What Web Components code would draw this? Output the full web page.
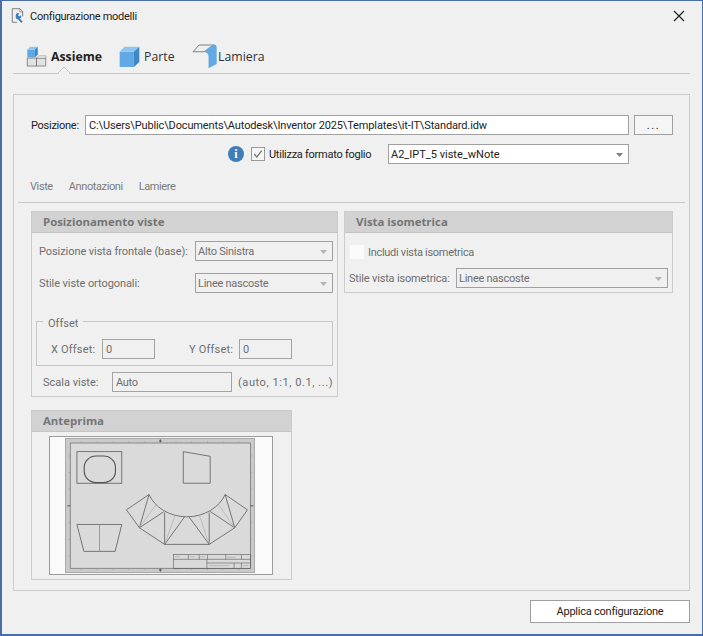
<!DOCTYPE html>
<html lang="it"><head><meta charset="utf-8"><title>Configurazione modelli</title>
<style>
html,body{margin:0;padding:0;background:#f0f0f0}
body{font:11px Roboto,"Noto Sans",sans-serif;color:#222}
</style></head><body>
<config-window></config-window>
<script>
function comp(name,html){
  customElements.define(name,class extends HTMLElement{
    connectedCallback(){
      if(this.shadowRoot)return;
      const r=this.attachShadow({mode:'open'});
      r.innerHTML=typeof html==='function'?html(this):html;
    }
  });
}
comp('ui-label',el=>`<style>:host{display:block;box-sizing:border-box;align-self:flex-start;padding-top:1px;white-space:nowrap;line-height:20px;flex:none;width:${el.getAttribute('w')?el.getAttribute('w')+'px':'auto'}}</style><slot></slot>`);
comp('ui-field',el=>{
  const w=el.getAttribute('w'),dis=el.hasAttribute('disabled');
  return `<style>:host{display:block;flex:none;box-sizing:border-box;height:20px;width:${w}px;border:1px solid ${dis?'#a3a3a3':'#a0a0a0'};background:${dis?'#f0f0f0':'#fff'};color:${dis?'#6e6e6e':'#222'};padding-left:${el.getAttribute('pad')||3}px;line-height:20px;white-space:nowrap;overflow:hidden}</style><slot></slot>`;
});
comp('ui-combo',el=>{
  const w=el.getAttribute('w'),dis=el.hasAttribute('disabled');
  return `<style>:host{display:flex;flex:none;box-sizing:border-box;height:20px;width:${w}px;border:1px solid #a0a0a0;background:${dis?'#f0f0f0':'#fff'};color:${dis?'#6e6e6e':'#222'};padding:0 5px 0 2px;line-height:18px;white-space:nowrap;align-items:center;justify-content:space-between}
  span{padding-top:2px}svg{flex:none;margin-top:1px}</style><span><slot></slot></span><svg width="7" height="4" viewBox="0 0 7 4"><path d="M0 0h7L3.5 4z" fill="${dis?'#b4b4b4':'#808080'}"/></svg>`;
});
comp('ui-check',el=>{
  const on=el.hasAttribute('checked');
  return `<style>:host{display:block;flex:none;box-sizing:border-box;width:14px;height:14px;${on?'border:1px solid #9a9a9a;background:#f6f6f6':'background:#fbfbfb'}}svg{display:block}</style>${on?'<svg width="12" height="12" viewBox="0 0 12 12"><path d="M2.3 6.2 4.8 9 9.8 2.6" fill="none" stroke="#777" stroke-width="1.3"/></svg>':''}`;
});
comp('ui-group',el=>{
  const w=el.getAttribute('w'),h=el.getAttribute('h');
  return `<style>:host{display:block;flex:none;box-sizing:border-box;width:${w}px;height:${h}px;border:1px solid #cbcbcb}
  header{box-sizing:border-box;height:21px;padding-left:11px;background:#d2d2d2;border-bottom:1px solid #c4c4c4;color:#757575;font-family:"Open Sans",sans-serif;font-weight:700;font-size:11.4px;line-height:20px}</style><header>${el.getAttribute('title-text')}</header><slot></slot>`;
});
comp('ui-row',el=>`<style>:host{display:flex;align-items:center;height:${el.getAttribute('h')||20}px;margin-top:${el.getAttribute('mt')||0}px;padding-left:${el.getAttribute('pl')||0}px;color:#6e6e6e}</style><slot></slot>`);
comp('offset-box',`<style>:host{display:block;position:relative;box-sizing:border-box;width:297px;height:45px;margin:28px 0 0 -3px;border:1px solid #c6c6c6;padding:17px 0 0 14px;color:#6e6e6e}
  .legend{position:absolute;left:6px;top:-9px;padding:0 5px;background:#f0f0f0;line-height:22px}
  .row{display:flex;align-items:center;height:20px}</style><div class="legend">Offset</div><div class="row"><slot></slot></div>`);
comp('main-tab',el=>`<style>:host{display:flex;align-items:center;flex:none;font-family:"Open Sans",sans-serif;font-size:12.3px;color:${el.hasAttribute('active')?'#222':'#333'};font-weight:${el.hasAttribute('active')?700:400};height:26px}</style><slot name="icon"></slot><slot></slot>`);
comp('tab-strip',`<style>:host{display:flex;position:relative;box-sizing:border-box;height:42px;margin-left:11px;width:677px;border-bottom:1px solid #c8c8c8;padding:11px 0 0 13px}
  svg{position:absolute;left:44px;top:34px}</style><slot></slot><svg width="14" height="8" viewBox="0 0 14 8"><path d="M1 7 7 1l6 6" fill="#f0f0f0" stroke="#c8c8c8"/><path d="M2 7.6h10" stroke="#f0f0f0" stroke-width="1.6"/></svg>`);
comp('title-bar',`<style>:host{display:flex;align-items:center;box-sizing:border-box;height:31px;padding:0 17px 1px 9px;color:#222;letter-spacing:-.27px}
  .t{flex:1;margin-left:4px}svg{display:block;flex:none}</style>
  <svg width="15" height="16" viewBox="33 26 42 46"><path d="M36 28H58L66 36V50M50 67H36V28" fill="none" stroke="#6a6a6a" stroke-width="2.4"/><path d="M58 28v9h8" fill="none" stroke="#6a6a6a" stroke-width="1.8"/><path d="M47 43c3-3 7-3 9-1l-3 4 1 3 4 1 3-3c2 3 1 8-3 9l-1 0 9 9-4 4-9-10c-6 0-9-9-6-16z" fill="#3b7fc0"/></svg>
  <span class="t"><slot></slot></span>
  <svg width="12" height="12" viewBox="0 0 12 12"><path d="M1 1l10 10M11 1 1 11" stroke="#222" stroke-width="1.2"/></svg>`);
comp('sub-tabs',`<style>:host{display:flex;align-items:center;box-sizing:border-box;height:26px;width:667px;margin:13px 0 0 -13px;padding:0 0 6px 12px;border-bottom:1px solid #c8c8c8;color:#7b7b7b;letter-spacing:-.4px}</style><slot></slot>`);
comp('main-panel',`<style>:host{display:block;box-sizing:border-box;width:677px;height:497px;margin:20px 0 0 11px;border:1px solid #cbcbcb;padding:20px 16px 0 17px}</style><slot></slot>`);
comp('preview-sheet',`<style>:host{display:block;box-sizing:border-box;width:224px;height:139px;margin:4px 0 0 17px;background:#fafafa;border:1px solid #9c9c9c}svg{display:block}</style>
<svg width="222" height="137" viewBox="74 95 668 412"><defs><filter id="b" x="-2%" y="-2%" width="104%" height="104%"><feGaussianBlur stdDeviation="1.1"/></filter></defs>
<g filter="url(#b)" fill="none" stroke="#5c5c5c" stroke-width="2.4">
<rect x="121" y="99" width="568" height="404" fill="#cacaca" stroke="#999"/>
<rect x="135" y="113" width="542" height="377" fill="#dadada" stroke="#777"/>
<g stroke="#9a9a9a" stroke-width="2"><path d="M168 108v5M216 108v5M264 108v5M311 108v5M358 108v5M453 108v5M500 108v5M548 108v5M595 108v5M642 108v5M168 490v5M216 490v5M264 490v5M311 490v5M358 490v5M453 490v5M500 490v5M548 490v5M595 490v5M642 490v5M130 152h5M130 202h5M130 252h5M130 352h5M130 403h5M130 453h5M677 152h5M677 202h5M677 252h5M677 352h5M677 403h5M677 453h5"/></g>
<g stroke="#555" stroke-width="3"><path d="M406 102v9M402 107h8M406 491v9M402 495h8M126 302h9M677 302h9"/></g>
<rect x="155" y="139" width="135" height="95"/>
<rect x="177" y="152" width="94" height="80" rx="36" ry="34" stroke-width="3.4" stroke="#555"/>
<path d="M475 139 556 153V234H475Z"/>
<path d="M155 358H290L270 439H176Z"/><path d="M223 358V439" stroke="#8a8a8a"/>
<path d="M372 268 304 314 343 368 419 418H553L630 368 668 314 601 268C585 305 540 335 486 335 432 335 388 305 372 268Z"/>
<path d="M372 268 343 368 416 320M419 322V418L479 335M492 335 553 418V322M630 368 556 319M601 268 630 368"/>
<g stroke="#a8a8a8" stroke-width="1.8"><path d="M343 368 392 300M419 418 450 332M553 418 524 332M630 368 582 300"/></g>
<g stroke-width="1.8"><rect x="445" y="449" width="232" height="41"/><path d="M445 463H677M546 463V490M546 474H677M490 449V463M523 449V463M548 449V463M603 449V463M650 449V463M628 474V490M650 474V490"/></g>
<g stroke="#9a9a9a" stroke-width="1.6"><path d="M449 455H465M494 455H510M527 455H540M607 457H632M552 482H612M655 482H672"/></g>
</g></svg>`);
comp('config-window',`<style>:host{display:flex;flex-direction:column;box-sizing:border-box;width:703px;height:636px;overflow:hidden;background:#f0f0f0;border-style:solid;border-color:#4a6fa8;border-width:1px 1px 2px 2px}
  .foot{display:flex;justify-content:flex-end;padding:9px 12px 0 0;flex:none}
  .apply{box-sizing:border-box;width:160px;height:23px;border:1px solid #a0a0a0;background:#fff;color:#222;line-height:21px;text-align:center;letter-spacing:-.23px}
  .r{display:flex;align-items:center;height:20px}
  .cols{display:flex;align-items:flex-start;gap:6px;margin-top:8px}
  .col{display:flex;flex-direction:column;gap:13px;flex:none}
  .tab-t{margin-left:4px}
  svg.i{display:block;flex:none}
  .info{flex:none;width:16px;height:16px;border-radius:50%;background:#3f7db8;color:#fff;font:700 12px/16px "Liberation Serif",serif;text-align:center}
  .btn{box-sizing:border-box;width:39px;height:20px;border:1px solid #a0a0a0;background:#f5f5f5;text-align:center;line-height:20px;margin-left:5px;flex:none;letter-spacing:1.6px}
  .st{margin-right:16px}
</style>
<title-bar>Configurazione modelli</title-bar>
<tab-strip>
  <main-tab active style="width:93px"><svg slot="icon" class="i" width="21" height="21" viewBox="76 134 66 66">
    <path d="M80 172h29v25H80z" fill="#e2e2e2" stroke="#555" stroke-width="2"/><path d="M109 172h29v25h-29z" fill="#e2e2e2" stroke="#555" stroke-width="2"/><path d="M109 172l8-7h22l-1 7z" fill="#f4f4f4" stroke="#777" stroke-width="1.5"/>
    <path d="M80 145h24v25H80z" fill="#5fa8e2"/><path d="M80 145l9-9h24l-9 9z" fill="#8fc6f0"/><path d="M104 145l9-9v25l-9 9z" fill="#3f88c8"/></svg><span class="tab-t">Assieme</span></main-tab>
  <main-tab style="width:73px"><svg slot="icon" class="i" width="21" height="21" viewBox="356 133 62 62">
    <path d="M358 150h42v45h-42z" fill="#62a9e3"/><path d="M358 150l14-15h44l-16 15z" fill="#8fc6f0"/><path d="M400 150l16-15v45l-16 15z" fill="#3f88c8"/></svg><span class="tab-t">Parte</span></main-tab>
  <main-tab><svg slot="icon" class="i" width="25" height="25" viewBox="576 131 74 74">
    <path d="M579 154 597 134H640L612 154Z" fill="#efefef" stroke="#666" stroke-width="2.4"/><path d="M612 154C620 146 630 136 640 133 646 132 649 136 649 142V190L625 203V168C625 160 620 156 612 154Z" fill="#62a9e3"/></svg><span style="margin-left:1px">Lamiera</span></main-tab>
</tab-strip>
<main-panel>
  <div class="r"><ui-label w="54" style="letter-spacing:-.27px">Posizione:</ui-label><ui-field w="544" style="letter-spacing:-.135px">C:\\Users\\Public\\Documents\\Autodesk\\Inventor 2025\\Templates\\it-IT\\Standard.idw</ui-field><div class="btn">...</div></div>
  <div class="r" style="margin-top:9px;padding-left:197px"><div class="info">i</div><ui-check checked style="margin-left:7px"></ui-check><ui-label w="119" style="margin-left:4px;letter-spacing:-.26px">Utilizza formato foglio</ui-label><ui-combo w="241">A2_IPT_5 viste_wNote</ui-combo></div>
  <sub-tabs><span class="st">Viste</span><span class="st">Annotazioni</span><span>Lamiere</span></sub-tabs>
  <div class="cols">
    <div class="col">
      <ui-group w="307" h="186" title-text="Posizionamento viste">
        <ui-row mt="8" pl="7"><ui-label w="156" style="letter-spacing:-.07px">Posizione vista frontale (base):</ui-label><ui-combo w="138" disabled style="letter-spacing:-.23px">Alto Sinistra</ui-combo></ui-row>
        <ui-row mt="12" pl="7"><ui-label w="156" style="letter-spacing:-.08px">Stile viste ortogonali:</ui-label><ui-combo w="138" disabled style="letter-spacing:-.26px">Linee nascoste</ui-combo></ui-row>
        <div style="padding-left:7px"><offset-box><ui-label w="51" style="letter-spacing:.2px">X Offset:</ui-label><ui-field w="53" disabled>0</ui-field><ui-label w="50" style="margin-left:34px;letter-spacing:.2px">Y Offset:</ui-label><ui-field w="53" disabled>0</ui-field></offset-box></div>
        <ui-row mt="6" pl="11"><ui-label w="69">Scala viste:</ui-label><ui-field w="120" disabled style="letter-spacing:-.3px">Auto</ui-field><ui-label style="margin-left:6px;letter-spacing:.57px">(auto, 1:1, 0.1, ...)</ui-label></ui-row>
      </ui-group>
      <ui-group w="261" h="170" title-text="Anteprima"><preview-sheet></preview-sheet></ui-group>
    </div>
    <ui-group w="329" h="82" title-text="Vista isometrica">
      <ui-row mt="12" h="14" pl="5"><ui-check></ui-check><ui-label style="margin:-3px 0 0 4px;letter-spacing:-.29px">Includi vista isometrica</ui-label></ui-row>
      <ui-row mt="9" pl="4"><ui-label w="107" style="letter-spacing:-.17px">Stile vista isometrica:</ui-label><ui-combo w="212" disabled style="letter-spacing:-.26px">Linee nascoste</ui-combo></ui-row>
    </ui-group>
  </div>
</main-panel>
<div class="foot"><div class="apply">Applica configurazione</div></div>`);
</script></body></html>
